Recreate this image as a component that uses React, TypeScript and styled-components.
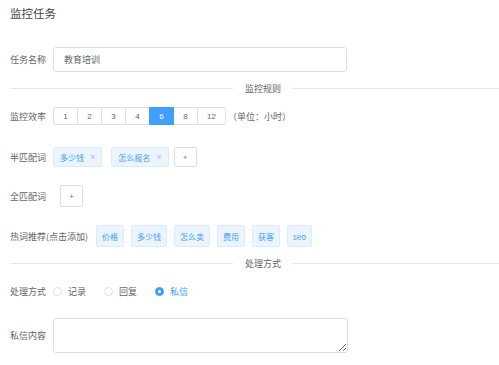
import React, { useState } from 'react';
import styled, { createGlobalStyle } from 'styled-components';

const GlobalStyle = createGlobalStyle`
  html, body {
    margin: 0;
    padding: 0;
    background: #fff;
    overflow: hidden;
  }
  body {
    font-family: "Noto Sans CJK SC", "Noto Sans", sans-serif;
    color: #666;
  }
`;

const rates = ['1', '2', '3', '4', '6', '8', '12'];
const hotWords = ['价格', '多少钱', '怎么卖', '费用', '获客', 'seo'];
const modes = ['记录', '回复', '私信'];

const App: React.FC = () => {
  const [rate, setRate] = useState('6');
  const [mode, setMode] = useState('私信');
  const [halfWords, setHalfWords] = useState(['多少钱', '怎么报名']);

  return (
    <Page>
      <GlobalStyle />
      <Title>监控任务</Title>

      <Row top={21} h={25}>
        <Label>任务名称</Label>
        <TextInput defaultValue="教育培训" />
      </Row>

      <Divider top={6}>
        <LeftLine />
        <DividerText>监控规则</DividerText>
        <RightLine />
      </Divider>

      <Row top={9} h={18}>
        <Label>监控效率</Label>
        <RateGroup>
          {rates.map((r) => (
            <RateButton key={r} wide={r.length > 1} active={r === rate} onClick={() => setRate(r)}>
              {r}
            </RateButton>
          ))}
        </RateGroup>
        <Unit>（单位：小时）</Unit>
      </Row>

      <Row top={22} h={20}>
        <Label>半匹配词</Label>
        {halfWords.map((w) => (
          <Tag key={w}>
            {w}
            <Close onClick={() => setHalfWords(halfWords.filter((x) => x !== w))}>×</Close>
          </Tag>
        ))}
        <AddButton offset={-4}>+</AddButton>
      </Row>

      <Row top={18} h={22}>
        <Label>全匹配词</Label>
        <AddButton offset={7} tall>+</AddButton>
      </Row>

      <Row top={18} h={22}>
        <Label gap={8}>热词推荐(点击添加)</Label>
        {hotWords.map((w) => (
          <HotTag key={w}>{w}</HotTag>
        ))}
      </Row>

      <Divider top={6}>
        <LeftLine />
        <DividerText>处理方式</DividerText>
        <RightLine />
      </Divider>

      <Row top={8} h={20}>
        <Label>处理方式</Label>
        {modes.map((m) => (
          <RadioItem key={m} checked={m === mode} onClick={() => setMode(m)}>
            <RadioDot checked={m === mode} />
            {m}
          </RadioItem>
        ))}
      </Row>

      <Row top={17} h={35}>
        <Label>私信内容</Label>
        <TextArea />
      </Row>
    </Page>
  );
};

const Page = styled.div`
  padding: 0 0 0 10px;
  font-size: 9px;
`;

const Title = styled.div`
  height: 26px;
  line-height: 26px;
  font-size: 11.5px;
  color: #444;
`;

const Row = styled.div<{ top: number; h: number }>`
  display: flex;
  align-items: center;
  margin-top: ${(p) => p.top}px;
  height: ${(p) => p.h}px;
`;

const Label = styled.span<{ gap?: number }>`
  min-width: 37px;
  margin-right: ${(p) => p.gap ?? 6}px;
  white-space: nowrap;
  font-size: 9px;
  color: #666;
`;

const TextInput = styled.input`
  box-sizing: border-box;
  width: 294px;
  height: 25px;
  padding: 0 10px;
  border: 1px solid #dcdfe6;
  border-radius: 3px;
  font-family: inherit;
  font-size: 9px;
  color: #606266;
  outline: none;
`;

const Divider = styled.div<{ top: number }>`
  display: flex;
  align-items: center;
  height: 20px;
  margin-top: ${(p) => p.top}px;
`;

const LeftLine = styled.div`
  width: 223px;
  height: 1px;
  background: #e4e7ed;
`;

const RightLine = styled.div`
  flex: 1;
  height: 1px;
  background: #e4e7ed;
`;

const DividerText = styled.span`
  padding: 0 12px;
  font-size: 9px;
  color: #666;
`;

const RateGroup = styled.div`
  display: flex;
  height: 18px;
`;

const RateButton = styled.button<{ active: boolean; wide: boolean }>`
  box-sizing: border-box;
  width: ${(p) => (p.wide ? 29 : 25)}px;
  height: 18px;
  padding: 0;
  margin-left: -1px;
  border: 1px solid ${(p) => (p.active ? '#409eff' : '#dcdfe6')};
  background: ${(p) => (p.active ? '#409eff' : '#fff')};
  color: ${(p) => (p.active ? '#fff' : '#666')};
  font-family: "Liberation Sans", Arial, sans-serif;
  font-size: 8px;
  position: relative;
  z-index: ${(p) => (p.active ? 1 : 0)};
  cursor: pointer;

  &:first-child {
    margin-left: 0;
    border-radius: 2px 0 0 2px;
  }
  &:last-child {
    border-radius: 0 2px 2px 0;
  }
`;

const Unit = styled.span`
  margin-left: 2px;
  font-size: 9px;
  color: #666;
`;

const Tag = styled.span`
  box-sizing: border-box;
  display: inline-flex;
  align-items: center;
  height: 20px;
  padding: 0 6px;
  margin-right: 9px;
  border: 1px solid #d9ecff;
  border-radius: 2px;
  background: #ecf5ff;
  color: #409eff;
  font-size: 8px;
`;

const Close = styled.span`
  margin-left: 6px;
  font-family: "Liberation Sans", Arial, sans-serif;
  font-size: 9px;
  color: #8cc5ff;
  cursor: pointer;
`;

const AddButton = styled.button<{ offset?: number; tall?: boolean }>`
  box-sizing: border-box;
  width: 23px;
  height: ${(p) => (p.tall ? 22 : 20)}px;
  margin-left: ${(p) => p.offset ?? 0}px;
  padding: 0;
  border: 1px solid #dcdfe6;
  border-radius: 2px;
  background: #fff;
  color: #666;
  font-size: 7px;
  font-family: "Liberation Sans", Arial, sans-serif;
`;

const HotTag = styled.span`
  box-sizing: border-box;
  display: inline-flex;
  align-items: center;
  height: 22px;
  padding: 0 5px;
  margin-right: 7px;
  border: 1px solid #d9ecff;
  border-radius: 2px;
  background: #ecf5ff;
  color: #409eff;
  font-size: 8px;
  cursor: pointer;
`;

const RadioItem = styled.label<{ checked: boolean }>`
  display: inline-flex;
  align-items: center;
  margin-right: 18px;
  font-size: 9px;
  color: ${(p) => (p.checked ? '#409eff' : '#666')};
  cursor: pointer;
`;

const RadioDot = styled.span<{ checked: boolean }>`
  box-sizing: border-box;
  width: 9px;
  height: 9px;
  margin-right: 6px;
  border-radius: 50%;
  border: 1px solid ${(p) => (p.checked ? '#409eff' : '#dcdfe6')};
  background: ${(p) => (p.checked ? '#409eff' : '#fff')};
  display: inline-flex;
  align-items: center;
  justify-content: center;

  &::after {
    content: '';
    width: 3px;
    height: 3px;
    border-radius: 50%;
    background: #fff;
    display: ${(p) => (p.checked ? 'block' : 'none')};
  }
`;

const TextArea = styled.textarea`
  box-sizing: border-box;
  width: 295px;
  height: 35px;
  border: 1px solid #dcdfe6;
  border-radius: 3px;
  font-family: inherit;
  font-size: 9px;
  outline: none;
`;

export default App;
